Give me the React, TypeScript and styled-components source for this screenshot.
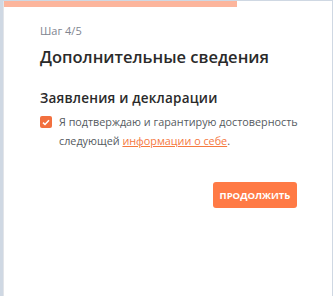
import React from "react";
import styled, { createGlobalStyle } from "styled-components";

const Global = createGlobalStyle`
  html, body {
    margin: 0;
    padding: 0;
    background: #cfd8e3;
    font-family: "Open Sans", "Noto Sans", sans-serif;
  }
`;

const Page = styled.div`
  width: 333px;
  height: 296px;
  box-sizing: border-box;
  padding: 1px 1px 0 3px;
`;

const Card = styled.div`
  background: #fff;
  height: 100%;
  box-sizing: border-box;
  border-left: 1px solid #e2e4e8;
`;

const Progress = styled.div`
  height: 6px;
  background: transparent;
  margin-bottom: 16px;
`;

const ProgressFill = styled.div`
  height: 100%;
  background: #fcb59c;
`;

const Body = styled.div`
  padding: 0 34px 0 36px;
  display: flex;
  flex-direction: column;
`;

const Step = styled.div`
  font-size: 11px;
  color: #808590;
  line-height: 15px;
`;

const Title = styled.h1`
  margin: 7px 0 0;
  font-size: 16.5px;
  font-weight: 600;
  color: #2a2a2a;
  line-height: 23px;
`;

const Section = styled.h2`
  margin: 21px 0 0;
  font-size: 13.5px;
  font-weight: 600;
  color: #2a2a2a;
  line-height: 19px;
  letter-spacing: 0.2px;
`;

const CheckRow = styled.label`
  display: flex;
  gap: 7px;
  margin-top: 5px;
  align-items: flex-start;
`;

const Box = styled.span`
  flex: none;
  width: 12px;
  height: 12px;
  margin-top: 3px;
  border-radius: 2px;
  background: #f2703f;
  display: flex;
  align-items: center;
  justify-content: center;
`;

const CheckText = styled.span`
  font-size: 10.8px;
  line-height: 19px;
  margin-top: -1px;
  color: #555a60;
`;

const Link = styled.a`
  color: #f5793f;
  text-decoration: underline;
`;

const Actions = styled.div`
  display: flex;
  justify-content: flex-end;
  margin-top: 32px;
  padding-right: 1px;
`;

const Button = styled.button`
  border: none;
  background: #ff7a45;
  color: #fff;
  font-family: "Open Sans", sans-serif;
  font-weight: 700;
  font-size: 9.5px;
  height: 26px;
  width: 84px;
  padding: 0;
  border-radius: 3px;
`;

export default function App() {
  const progress = 4 / 5;
  return (
    <>
      <Global />
      <Page>
        <Card>
          <Progress>
            <ProgressFill style={{ width: `${Math.round(progress * 89)}%` }} />
          </Progress>
          <Body>
            <Step>Шаг 4/5</Step>
            <Title>Дополнительные сведения</Title>
            <Section>Заявления и декларации</Section>
            <CheckRow>
              <Box>
                <svg width="8" height="7" viewBox="0 0 8 7">
                  <path d="M1 3.6 L3 5.5 L7 1.2" stroke="#fff" strokeWidth="1.5" fill="none" />
                </svg>
              </Box>
              <CheckText>
                Я подтверждаю и гарантирую достоверность следующей{" "}
                <Link href="#">информации о себе</Link>.
              </CheckText>
            </CheckRow>
            <Actions>
              <Button>ПРОДОЛЖИТЬ</Button>
            </Actions>
          </Body>
        </Card>
      </Page>
    </>
  );
}
